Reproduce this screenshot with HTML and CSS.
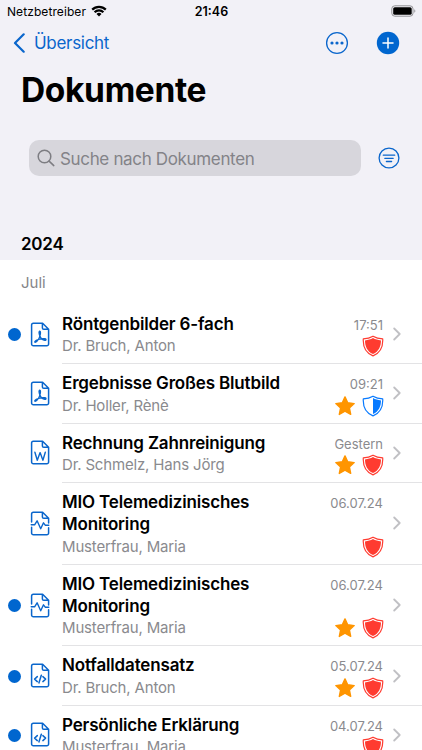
FILE: index.html
```html
<!DOCTYPE html>
<html lang="de">
<head>
    <meta charset="UTF-8">
    <meta name="viewport" content="width=device-width, initial-scale=1.0">
    <title>Dokumente</title>
    <link rel="stylesheet" href="styles.css">
</head>

<body>
    <!-- Icons -->
    <svg class="icon-defs" width="0" height="0">
        <symbol id="doc" viewBox="0 0 20 26">
            <path d="M12.6 1.3H3.4a1.8 1.8 0 0 0-1.8 1.8v18.9a1.8 1.8 0 0 0 1.8 1.8h13.4a1.8 1.8 0 0 0 1.8-1.8V7.3zM12.4 1.5v4.4a1.4 1.4 0 0 0 1.4 1.4h4.6" />
        </symbol>
        <symbol id="pdf" viewBox="0 0 20 26">
            <use href="#doc" />
            <path d="M9.7 9.2c-1 .5-.4 3.200.3 5 .8 2 2.500 3.800 4.900 4.100 1.500.1 1.400-1.300.1-1.500-2.800-.4-6.100.2-8.700 1.500-1.900 1-1.700 2.200-.8 1.900 2.200-1 4.300-5 4.800-8.100.2-1.500.2-3.100-.6-2.900z" stroke-width="1.400" />
        </symbol>
        <symbol id="word" viewBox="0 0 20 26">
            <use href="#doc" />
            <path d="M4.900 12.200l2.400 8 2.800-7.600 2.800 7.600 2.400-8" stroke-width="1.400" />
        </symbol>
        <symbol id="code" viewBox="0 0 20 26">
            <use href="#doc" />
            <path d="M7.300 13.600l-2.700 2.500 2.700 2.500M12.900 13.600l2.700 2.500-2.700 2.500M11.300 12.300l-2.400 7.600" stroke-width="1.500" />
        </symbol>
        <symbol id="pulse" viewBox="0 0 20 26">
            <path d="M1.600 10.900V3.100a1.800 1.800 0 0 1 1.800-1.800h9.200l6 6v4.600M12.400 1.500v4.400a1.400 1.400 0 0 0 1.400 1.400h4.600M1.600 16.200v5.800a1.800 1.800 0 0 0 1.800 1.800h13.400a1.800 1.800 0 0 0 1.800-1.800v-5.200" />
            <path d="M1.200 13.800h3.400l2.500-4 3.600 8 2.800-6 1.900 2.500h3.400" stroke-width="1.400" />
        </symbol>
        <symbol id="star" viewBox="0 0 22 22">
            <path d="M11 1.900l2.700 5.900 6.500.8-4.800 4.400 1.300 6.400-5.700-3.200-5.700 3.200 1.300-6.400-4.800-4.400 6.500-.8z" fill="#ff9500" stroke="#ff9500" stroke-width="1.400" stroke-linejoin="round" />
        </symbol>
        <symbol id="shield-outline" viewBox="0 0 22 22">
            <path d="M11 1.200C8.300 2.800 5 3.700 1.300 3.900c-.4 6.900 2 14 9.700 17 7.700-3 10.100-10.100 9.700-17C17 3.700 13.700 2.800 11 1.200z" fill="none" stroke="currentColor" stroke-width="1.200" stroke-linejoin="round" />
        </symbol>
        <symbol id="shield" viewBox="0 0 22 22">
            <use href="#shield-outline" />
            <path d="M11 3.100C8.700 4.500 6 5.200 3 5.500c0 5.700 2.100 10.900 8 13.600 5.900-2.700 8-7.900 8-13.600-3-.3-5.700-1-8-2.400z" fill="currentColor" />
        </symbol>
        <symbol id="shield-half" viewBox="0 0 22 22">
            <use href="#shield-outline" />
            <path d="M11 3.100v16c5.900-2.700 8-7.900 8-13.600-3-.3-5.700-1-8-2.400z" fill="currentColor" />
        </symbol>
        <symbol id="chevron" viewBox="0 0 8 14">
            <path d="M1.200 1.500L6.700 7l-5.500 5.500" fill="none" stroke="#c0c0c4" stroke-width="1.800" stroke-linecap="round" stroke-linejoin="round" />
        </symbol>
    </svg>

    <!-- Kopfbereich -->
    <header class="header">
        <div class="status-bar">
            <div class="carrier">
                <span>Netzbetreiber</span>
                <svg class="wifi" viewBox="0 0 16 12">
                    <g fill="none" stroke="#000" stroke-width="2.200">
                        <path d="M1.200 4.600a9.600 9.600 0 0 1 13.600 0" />
                        <path d="M3.600 7.200a6.200 6.200 0 0 1 8.800 0" />
                    </g>
                    <path d="M5.500 8.900a3.600 3.600 0 0 1 5 0L8 11.500z" />
                </svg>
            </div>
            <span class="clock">21:46</span>
            <div class="battery-wrapper">
                <svg class="battery" viewBox="0 0 25 12">
                    <rect x=".8" y=".8" width="21.200" height="10.400" rx="3" fill="none" stroke="#929295" />
                    <rect x="2.200" y="2.200" width="18.500" height="7.600" rx="1.600" />
                    <path d="M23.300 4.300c1.400.6 1.400 2.800 0 3.400z" fill="#929295" />
                </svg>
            </div>
        </div>

        <nav class="nav-bar">
            <a class="back" href="#">
                <svg class="back-arrow" viewBox="0 0 12 20">
                    <path d="M10.700 1.300L2 10l8.700 8.700" />
                </svg>
                <span>Übersicht</span>
            </a>
            <button class="round-button" aria-label="Mehr">
                <svg viewBox="0 0 24 24">
                    <circle cx="12" cy="12" r="10.400" fill="none" stroke="#0a66cc" stroke-width="1.300" />
                    <g fill="#0a66cc">
                        <circle cx="7" cy="12" r="1.600" />
                        <circle cx="12" cy="12" r="1.600" />
                        <circle cx="17" cy="12" r="1.600" />
                    </g>
                </svg>
            </button>
            <button class="round-button" aria-label="Hinzufügen">
                <svg viewBox="0 0 24 24">
                    <circle cx="12" cy="12" r="11.200" fill="#0066cf" />
                    <path d="M12 7v10M7 12h10" stroke="#fff" stroke-width="1.500" stroke-linecap="round" />
                </svg>
            </button>
        </nav>

        <h1 class="page-title">Dokumente</h1>

        <div class="search-container">
            <div class="search-wrapper">
                <svg class="search-icon" viewBox="0 0 18 18">
                    <circle cx="7.500" cy="7.500" r="6.300" />
                    <path d="M12.100 12.100l4.700 4.500" />
                </svg>
                <span>Suche nach Dokumenten</span>
            </div>
            <button class="filter-button" aria-label="Filter">
                <svg viewBox="0 0 24 24">
                    <g fill="none" stroke="#0a66cc" stroke-width="1.300" stroke-linecap="round">
                        <circle cx="12" cy="12" r="9.900" />
                        <path d="M6.300 9.200h11.400M7.800 12.300h8.400M9.400 15.500h5.200" />
                    </g>
                </svg>
            </button>
        </div>

        <h2 class="year">2024</h2>
    </header>

    <!-- Dokumentenliste -->
    <main>
        <h3 class="month">Juli</h3>

        <div class="row">
            <div class="marker"><span class="unread"></span></div>
            <svg class="doc-icon"><use href="#pdf" /></svg>
            <div class="content">
                <div class="text">
                    <p class="name">Röntgenbilder 6-fach</p>
                    <p class="author">Dr. Bruch, Anton</p>
                </div>
                <div class="meta">
                    <span class="date">17:51</span>
                    <div class="badges">
                        <svg class="red"><use href="#shield" /></svg>
                    </div>
                </div>
                <svg class="chevron"><use href="#chevron" /></svg>
            </div>
        </div>

        <div class="row">
            <div class="marker"></div>
            <svg class="doc-icon"><use href="#pdf" /></svg>
            <div class="content">
                <div class="text">
                    <p class="name">Ergebnisse Großes Blutbild</p>
                    <p class="author">Dr. Holler, Rènè</p>
                </div>
                <div class="meta">
                    <span class="date">09:21</span>
                    <div class="badges">
                        <svg><use href="#star" /></svg>
                        <svg class="blue"><use href="#shield-half" /></svg>
                    </div>
                </div>
                <svg class="chevron"><use href="#chevron" /></svg>
            </div>
        </div>

        <div class="row">
            <div class="marker"></div>
            <svg class="doc-icon"><use href="#word" /></svg>
            <div class="content">
                <div class="text">
                    <p class="name">Rechnung Zahnreinigung</p>
                    <p class="author">Dr. Schmelz, Hans Jörg</p>
                </div>
                <div class="meta">
                    <span class="date">Gestern</span>
                    <div class="badges">
                        <svg><use href="#star" /></svg>
                        <svg class="red"><use href="#shield" /></svg>
                    </div>
                </div>
                <svg class="chevron"><use href="#chevron" /></svg>
            </div>
        </div>

        <div class="row tall">
            <div class="marker"></div>
            <svg class="doc-icon"><use href="#pulse" /></svg>
            <div class="content">
                <div class="text">
                    <p class="name">MIO Telemedizinisches<br>Monitoring</p>
                    <p class="author">Musterfrau, Maria</p>
                </div>
                <div class="meta">
                    <span class="date">06.07.24</span>
                    <div class="badges">
                        <svg class="red"><use href="#shield" /></svg>
                    </div>
                </div>
                <svg class="chevron"><use href="#chevron" /></svg>
            </div>
        </div>

        <div class="row tall">
            <div class="marker"><span class="unread"></span></div>
            <svg class="doc-icon"><use href="#pulse" /></svg>
            <div class="content">
                <div class="text">
                    <p class="name">MIO Telemedizinisches<br>Monitoring</p>
                    <p class="author">Musterfrau, Maria</p>
                </div>
                <div class="meta">
                    <span class="date">06.07.24</span>
                    <div class="badges">
                        <svg><use href="#star" /></svg>
                        <svg class="red"><use href="#shield" /></svg>
                    </div>
                </div>
                <svg class="chevron"><use href="#chevron" /></svg>
            </div>
        </div>

        <div class="row">
            <div class="marker"><span class="unread"></span></div>
            <svg class="doc-icon"><use href="#code" /></svg>
            <div class="content">
                <div class="text">
                    <p class="name">Notfalldatensatz</p>
                    <p class="author">Dr. Bruch, Anton</p>
                </div>
                <div class="meta">
                    <span class="date">05.07.24</span>
                    <div class="badges">
                        <svg><use href="#star" /></svg>
                        <svg class="red"><use href="#shield" /></svg>
                    </div>
                </div>
                <svg class="chevron"><use href="#chevron" /></svg>
            </div>
        </div>

        <div class="row">
            <div class="marker"><span class="unread"></span></div>
            <svg class="doc-icon"><use href="#code" /></svg>
            <div class="content">
                <div class="text">
                    <p class="name">Persönliche Erklärung</p>
                    <p class="author">Musterfrau, Maria</p>
                </div>
                <div class="meta">
                    <span class="date">04.07.24</span>
                    <div class="badges">
                        <svg class="red"><use href="#shield" /></svg>
                    </div>
                </div>
                <svg class="chevron"><use href="#chevron" /></svg>
            </div>
        </div>
    </main>
</body>
</html>
```

FILE: styles.css
```css
* {
    box-sizing: border-box;
    margin: 0;
    padding: 0;
}

body {
    height: 750px;
    overflow: hidden;
    background-color: #fff;
    color: #000;
    font-family: Inter, "Liberation Sans", sans-serif;
}

svg {
    display: block;
    flex-shrink: 0;
}

button {
    border: none;
    background: none;
    cursor: pointer;
}

.icon-defs {
    position: absolute;
}

/* Kopfbereich */
.header {
    height: 260px;
    background-color: #f2f1f7;
}

.status-bar {
    display: grid;
    grid-template-columns: 1fr auto 1fr;
    align-items: center;
    height: 22px;
    padding: 0 6px 0 7px;
    font-size: 12px;
}

.carrier {
    display: flex;
    align-items: center;
    gap: 5px;
    letter-spacing: 0.08px;
}

.wifi {
    width: 16px;
    height: 12px;
    margin-bottom: 1px;
}

.clock {
    font-size: 12.5px;
    font-weight: 600;
}

.battery-wrapper {
    display: flex;
    justify-content: flex-end;
}

.battery {
    width: 25px;
    height: 12px;
    margin-bottom: 1px;
}

.nav-bar {
    display: flex;
    align-items: center;
    height: 42px;
    padding: 0 22px 0 13px;
}

.back {
    display: flex;
    align-items: center;
    gap: 9px;
    margin-right: auto;
    color: #0a66cc;
    font-size: 17px;
    letter-spacing: -0.3px;
    text-decoration: none;
}

.back-arrow {
    width: 12px;
    height: 20px;
    fill: none;
    stroke: #0a66cc;
    stroke-width: 2.2;
    stroke-linecap: round;
    stroke-linejoin: round;
}

.round-button {
    width: 24px;
    height: 24px;
}

.round-button + .round-button {
    margin-left: 27px;
}

.page-title {
    padding: 4px 0 0 21px;
    font-size: 33.5px;
    font-weight: 700;
    letter-spacing: -0.35px;
    line-height: 44px;
}

.search-container {
    display: flex;
    align-items: center;
    margin-top: 28px;
    padding: 0 21px 0 29px;
}

.search-wrapper {
    display: flex;
    flex: 1;
    align-items: center;
    gap: 5px;
    height: 36px;
    padding-left: 8px;
    border-radius: 10px;
    background-color: #d7d6dc;
    color: #838388;
    font-size: 17px;
    letter-spacing: -0.34px;
}

.search-wrapper span {
    padding-top: 1px;
}

.search-icon {
    width: 18px;
    height: 18px;
    fill: none;
    stroke: #7d7d82;
    stroke-width: 1.5;
    stroke-linecap: round;
}

.filter-button {
    width: 24px;
    height: 24px;
    margin-left: 16px;
}

.year {
    padding: 57px 0 0 21px;
    font-size: 17px;
    font-weight: 600;
    letter-spacing: -0.25px;
    line-height: 22px;
}

/* Dokumentenliste */
.month {
    height: 45px;
    padding-left: 21px;
    color: #858589;
    font-size: 15px;
    font-weight: 400;
    line-height: 45px;
}

.row {
    display: flex;
    align-items: center;
    height: 59.3px;
}

.row.tall {
    height: 81.8px;
}

.marker {
    width: 30px;
    padding-left: 8px;
}

.unread {
    display: block;
    width: 13px;
    height: 13px;
    border-radius: 50%;
    background-color: #0066cf;
}

.doc-icon {
    width: 20px;
    height: 26px;
    fill: none;
    stroke: #0a66cc;
    stroke-width: 1.5;
    stroke-linecap: round;
    stroke-linejoin: round;
}

.content {
    display: flex;
    flex: 1;
    align-items: center;
    height: 100%;
    margin-left: 12px;
    padding-right: 21px;
    border-bottom: 1px solid #e3e3e5;
}

.text {
    flex: 1;
    padding-top: 2px;
    white-space: nowrap;
}

.name {
    font-size: 17px;
    font-weight: 600;
    letter-spacing: -0.16px;
    line-height: 22.4px;
}

.author {
    color: #8a8a8e;
    font-size: 15px;
    letter-spacing: -0.17px;
    line-height: 22px;
}

.meta {
    display: flex;
    flex-direction: column;
    align-items: flex-end;
    justify-content: space-between;
    height: 100%;
    padding: 11px 0 6px;
}

.date {
    color: #8a8a8e;
    font-size: 13px;
    line-height: 18px;
}

.badges {
    display: flex;
    gap: 6px;
    margin-right: -0.5px;
}

.badges svg {
    width: 22px;
    height: 22px;
}

.red {
    color: #ff3b30;
}

.blue {
    color: #087aff;
}

.chevron {
    width: 8px;
    height: 14px;
    margin-left: 10px;
}
```
